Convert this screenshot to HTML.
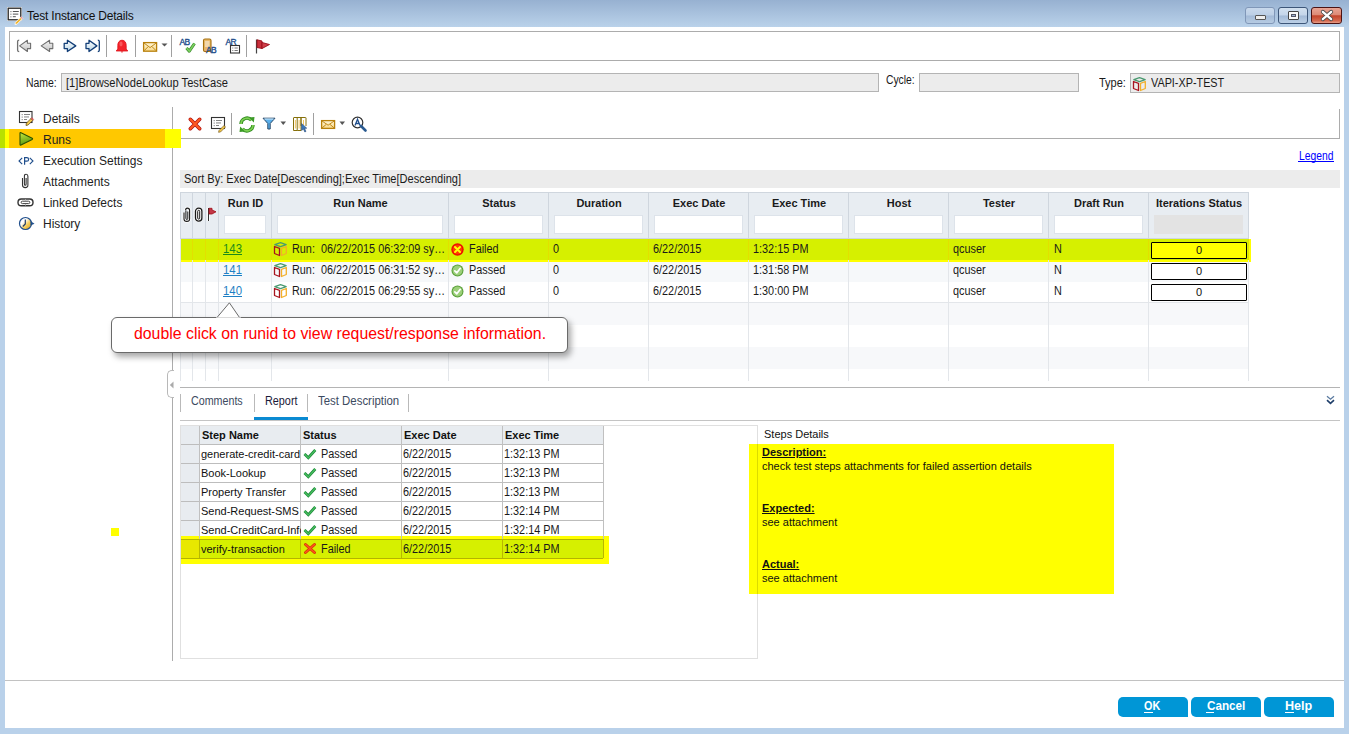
<!DOCTYPE html><html><head><meta charset="utf-8"><style>
*{margin:0;padding:0;box-sizing:border-box}
html,body{width:1349px;height:734px;overflow:hidden;background:#b9d1ea;font-family:"Liberation Sans",sans-serif;color:#000}
.a{position:absolute}
.t{position:absolute;white-space:nowrap;line-height:1}
svg{position:absolute;overflow:visible}
.wb{position:absolute;top:7px;width:30px;height:17px;border-radius:3px;border:1px solid #6d84a6;background:linear-gradient(#c9d9ec 0,#bccfe6 48%,#a3bad7 52%,#b6cbe2 100%)}
.fld{position:absolute;background:#ececec;border:1px solid #b4b4b4}
.lbl{position:absolute;white-space:nowrap;font-size:11.5px;line-height:1;color:#1a1a1a}
.side{position:absolute;left:43px;font-size:12px;line-height:1;color:#222;white-space:nowrap}
.hd{position:absolute;font-size:11px;font-weight:bold;line-height:1;white-space:nowrap;text-align:center;color:#1a1a1a}
.flt{position:absolute;height:19px;background:#fff;border:1px solid #dde3ea}
.c{position:absolute;font-size:12px;line-height:1;white-space:nowrap;color:#1a1a1a;transform:scaleX(.905);transform-origin:0 0;margin-top:-1px}
.btn{position:absolute;top:697px;width:70px;height:20px;background:#0096d6;border-radius:5px 5px 0 5px;color:#fff;font-weight:bold;font-size:12px;text-align:center;line-height:20px}
</style></head><body>
<div class="a" style="left:0px;top:0px;width:1349px;height:27px;background:linear-gradient(#97b1d1,#bad2ea)"></div>
<div class="a" style="left:5px;top:27px;width:1339px;height:701px;background:#fff"></div>
<svg style="left:6px;top:6px" width="18" height="18" viewBox="0 0 18 18"><rect x="1" y="1" width="15" height="14" fill="#fff"/>
<rect x="2.2" y="2.2" width="12.6" height="11.6" fill="#fff" stroke="#222" stroke-width="1.3"/>
<rect x="4.2" y="5" width="1.4" height="1.2" fill="#999"/><rect x="6.8" y="5" width="6" height="1" fill="#555"/>
<rect x="4.2" y="7.6" width="1.4" height="1.2" fill="#999"/><rect x="6.8" y="7.6" width="5.5" height="1" fill="#555"/>
<rect x="4.2" y="10.2" width="1.4" height="1.2" fill="#999"/><rect x="6.8" y="10.2" width="3" height="1" fill="#555"/>
<path d="M9.3 16.5 L14.3 11.5 L16 13.2 L11 18.2 L9 18.5Z" fill="#f2b733" stroke="#fff" stroke-width=".8"/>
<path d="M14.3 11.5 L15.2 10.6 L16.9 12.3 L16 13.2Z" fill="#e77" stroke="#fff" stroke-width=".5"/></svg>
<div class="t" style="left:27px;top:10px;font-size:12px;color:#101010;letter-spacing:-0.2px">Test Instance Details</div>
<div class="wb" style="left:1245px;border-color:#8097b8"><div class="a" style="left:9px;top:7px;width:11px;height:5px;background:#eee;border:1px solid #555;border-radius:1px"></div></div>
<div class="wb" style="left:1278px;border-color:#3d5679;background:linear-gradient(#d2e0ef 0,#c4d5ea 48%,#a3bad7 52%,#bcd0e6 100%)"><div class="a" style="left:9px;top:3px;width:11px;height:9px;background:#fafafa;border:1px solid #444;border-radius:1px"><div class="a" style="left:2px;top:2px;width:5px;height:3px;border:1px solid #556;background:#9fb5cf"></div></div></div>
<div class="wb" style="left:1311px;width:31px;border-color:#4b1313;background:linear-gradient(#e9a595 0,#dd8a76 45%,#c3442b 52%,#d5694f 85%,#e8a08b 100%)"><svg style="left:9px;top:2px" width="12" height="11" viewBox="0 0 12 11"><path d="M1.8 1.8 L10.2 9.2 M10.2 1.8 L1.8 9.2" stroke="#4a4a4a" stroke-width="3.8" stroke-linecap="round"/><path d="M1.8 1.8 L10.2 9.2 M10.2 1.8 L1.8 9.2" stroke="#fff" stroke-width="2.2" stroke-linecap="round"/></svg></div>
<div class="a" style="left:9px;top:31px;width:1331px;height:30px;border:1px solid #acacac"></div>
<svg style="left:15px;top:38px" width="18" height="16" viewBox="0 0 18 16"><defs><linearGradient id="ng" x1="0" y1="0" x2="0" y2="1"><stop offset="0" stop-color="#f4f4f4"/><stop offset="1" stop-color="#c4c4c4"/></linearGradient>
<linearGradient id="bg2" x1="0" y1="0" x2="0" y2="1"><stop offset="0" stop-color="#ffffff"/><stop offset="1" stop-color="#b8d4e4"/></linearGradient></defs>
<path d="M4.2 2.2 Q2.6 2.2 2.6 3.5 V12.3 Q2.6 13.6 4.2 13.6" stroke="#707070" stroke-width="1.3" fill="none"/>
<path d="M4.6 7.9 L12.4 2.3 V5.3 H15.6 V10.6 H12.4 V13.5 Z" fill="url(#ng)" stroke="#6e6e6e" stroke-width="1.1" stroke-linejoin="round"/></svg>
<svg style="left:39px;top:38px" width="16" height="16" viewBox="0 0 16 16"><path d="M2.2 7.9 L10.6 2.3 V5.3 H13.8 V10.6 H10.6 V13.5 Z" fill="url(#ng)" stroke="#6e6e6e" stroke-width="1.1" stroke-linejoin="round"/></svg>
<svg style="left:62px;top:38px" width="16" height="16" viewBox="0 0 16 16"><path d="M13.8 7.9 L5.4 2.3 V5.3 H2.2 V10.6 H5.4 V13.5 Z" fill="url(#bg2)" stroke="#133f78" stroke-width="1.3" stroke-linejoin="round"/></svg>
<svg style="left:84px;top:38px" width="18" height="16" viewBox="0 0 18 16"><path d="M12.9 7.9 L5 2.3 V5.3 H2 V10.6 H5 V13.5 Z" fill="url(#bg2)" stroke="#133f78" stroke-width="1.3" stroke-linejoin="round"/>
<path d="M13.8 2.2 Q15.3 2.2 15.3 3.5 V12.3 Q15.3 13.6 13.8 13.6" stroke="#133f78" stroke-width="1.3" fill="none"/></svg>
<div class="a" style="left:106px;top:35px;width:1px;height:22px;background:#a0a0a0"></div>
<svg style="left:115px;top:39px" width="14" height="15" viewBox="0 0 14 15"><path d="M7 1.2 C4 1.2 2.8 3.8 2.8 6.5 V10 L1.2 12 H12.8 L11.2 10 V6.5 C11.2 3.8 10 1.2 7 1.2Z" fill="#f2232b" stroke="#e01018" stroke-width=".8"/>
<path d="M5.6 12.5 H8.4 L7 13.8Z" fill="#e01018"/><ellipse cx="6" cy="5" rx="1.6" ry="2.4" fill="#ff7a7a" opacity=".6"/></svg>
<div class="a" style="left:135px;top:35px;width:1px;height:22px;background:#a0a0a0"></div>
<svg style="left:142px;top:41px" width="16" height="11" viewBox="0 0 16 11"><defs><linearGradient id="eg" x1="0" y1="0" x2="0" y2="1"><stop offset="0" stop-color="#fff6d8"/><stop offset="1" stop-color="#f8d88a"/></linearGradient></defs>
<rect x="1.6" y="1.6" width="13" height="8.6" fill="url(#eg)" stroke="#b8800c" stroke-width="1.3"/>
<path d="M2 2 L8.1 6.6 L14.2 2 M2 9.8 L6.2 5.6 M14.2 9.8 L10 5.6" stroke="#c08a1a" stroke-width="1" fill="none"/></svg>
<svg style="left:161px;top:43px" width="7" height="4" viewBox="0 0 7 4"><path d="M0.5 0.5 H6.5 L3.5 3.5Z" fill="#555"/></svg>
<div class="a" style="left:171px;top:35px;width:1px;height:22px;background:#a0a0a0"></div>
<svg style="left:179px;top:38px" width="17" height="15" viewBox="0 0 17 15"><text x="0.5" y="7" font-family="Liberation Sans" font-size="8.5" fill="#1f4e8c" stroke="#1f4e8c" stroke-width="0.35" letter-spacing="-0.6">AB</text>
<path d="M7.5 10 L10.3 13.2 L15.5 5.5" stroke="#3a8a2a" stroke-width="3" fill="none" stroke-linejoin="round"/>
<path d="M7.5 10 L10.3 13.2 L15.5 5.5" stroke="#7ad060" stroke-width="1.6" fill="none" stroke-linejoin="round"/></svg>
<svg style="left:202px;top:38px" width="17" height="16" viewBox="0 0 17 16"><path d="M1.5 2.5 Q1.5 1 3 1 H7.5 Q9 1 9 2.5 V13.5 H3 Q1.5 13.5 1.5 12Z" fill="#e8b86a" stroke="#a5700e" stroke-width="1.1"/>
<path d="M3 4 H7.5 M3 6 H7.5 M3 8 H7.5" stroke="#fff" stroke-width=".9"/>
<text x="4" y="14.6" font-family="Liberation Sans" font-size="8.5" fill="#1f4e8c" stroke="#1f4e8c" stroke-width="0.35" letter-spacing="-0.6">AB</text></svg>
<svg style="left:225px;top:38px" width="16" height="16" viewBox="0 0 16 16"><text x="0.5" y="7" font-family="Liberation Sans" font-size="8.5" fill="#1f4e8c" stroke="#1f4e8c" stroke-width="0.35" letter-spacing="-0.6">AR</text>
<rect x="5.5" y="7.5" width="9" height="7.5" fill="#fff" stroke="#333" stroke-width="1.1"/>
<path d="M7.3 10 H8.3 M9.5 10 H12.8 M7.3 12.5 H8.3 M9.5 12.5 H12.8" stroke="#777" stroke-width="1"/></svg>
<div class="a" style="left:246px;top:35px;width:1px;height:22px;background:#a0a0a0"></div>
<svg style="left:254px;top:38px" width="17" height="17" viewBox="0 0 17 17"><path d="M2.5 1.5 V15.5" stroke="#444" stroke-width="1.2"/>
<path d="M3 1.8 L8 3 V10.5 L3 9.5Z" fill="#c8303c" stroke="#9a0c18" stroke-width=".9" stroke-linejoin="round"/>
<path d="M8 4.5 L15.5 6.5 L8 10.5Z" fill="#d0404a" stroke="#9a0c18" stroke-width=".9" stroke-linejoin="round"/></svg>
<div class="t" style="left:25.6px;top:77px;font-size:12px;transform:scaleX(0.8687);transform-origin:0 0;color:#1a1a1a">Name:</div>
<div class="a" style="left:61px;top:73px;width:818px;height:19px;background:#ececec;border:1px solid #b4b4b4"></div>
<div class="t" style="left:66px;top:77px;font-size:12px;transform:scaleX(0.9282);transform-origin:0 0;color:#1a1a1a">[1]BrowseNodeLookup TestCase</div>
<div class="t" style="left:885.6px;top:74px;font-size:12px;transform:scaleX(0.8608);transform-origin:0 0;color:#1a1a1a">Cycle:</div>
<div class="a" style="left:919px;top:73px;width:160px;height:19px;background:#ececec;border:1px solid #b4b4b4"></div>
<div class="t" style="left:1099.2px;top:77px;font-size:12px;transform:scaleX(0.9166);transform-origin:0 0;color:#1a1a1a">Type:</div>
<div class="a" style="left:1130px;top:73px;width:210px;height:20px;background:#ececec;border:1px solid #b4b4b4"></div>
<svg style="left:1132px;top:76px" width="15" height="16" viewBox="0 0 15 16"><path d="M1.8 3.6 L7.5 1.6 L13.2 3.6 L7.5 5.6Z" fill="none" stroke="#4a9a70" stroke-width="1.2" stroke-linejoin="round"/>
<path d="M1.5 5.5 L6.5 7.3 V14.5 L1.5 12.5Z" fill="none" stroke="#a8141e" stroke-width="1.3" stroke-linejoin="round"/>
<path d="M8.5 7.3 L13.3 5.5 V12.5 L8.5 14.5Z" fill="none" stroke="#f2b02a" stroke-width="1.3" stroke-linejoin="round"/></svg>
<div class="t" style="left:1151px;top:77px;font-size:12px;transform:scaleX(0.9023);transform-origin:0 0;color:#1a1a1a">VAPI-XP-TEST</div>
<div class="a" style="left:0px;top:129px;width:181px;height:19px;background:#ffff00"></div>
<div class="a" style="left:0px;top:129px;width:5px;height:19px;background:#b8e000"></div>
<div class="a" style="left:9px;top:129px;width:156px;height:19px;background:#ffc800"></div>
<div class="side" style="left:43px;top:113px;">Details</div>
<div class="side" style="left:43px;top:134px;">Runs</div>
<div class="side" style="left:43px;top:155px;">Execution Settings</div>
<div class="side" style="left:43px;top:176px;">Attachments</div>
<div class="side" style="left:43px;top:197px;">Linked Defects</div>
<div class="side" style="left:43px;top:218px;">History</div>
<svg style="left:18px;top:110px" width="17" height="17" viewBox="0 0 17 17"><rect x="1.5" y="1.5" width="12.5" height="11" fill="#fff" stroke="#333" stroke-width="1.1"/>
<rect x="3.5" y="4" width="1.5" height="1.2" fill="#aaa"/><rect x="6" y="4" width="6" height=".9" fill="#777"/>
<rect x="3.5" y="6.5" width="1.5" height="1.2" fill="#aaa"/><rect x="6" y="6.5" width="5" height=".9" fill="#777"/>
<rect x="3.5" y="9" width="1.5" height="1.2" fill="#aaa"/><rect x="6" y="9" width="3" height=".9" fill="#777"/>
<path d="M8.3 13.2 L13 8.5 L14.8 10.3 L10.1 15 L8 15.5Z" fill="#f2c94c" stroke="#5a4010" stroke-width=".7"/>
<path d="M13 8.5 L13.9 7.6 L15.7 9.4 L14.8 10.3Z" fill="#e66" stroke="#a33" stroke-width=".4"/></svg>
<svg style="left:18px;top:131px" width="17" height="16" viewBox="0 0 17 16"><defs><linearGradient id="pg" x1="0" y1="0" x2="0.3" y2="1"><stop offset="0" stop-color="#c8e840"/><stop offset="1" stop-color="#5a9a10"/></linearGradient></defs>
<path d="M2 2.2 Q2 1.2 3 1.7 L14.2 7.2 Q15 7.8 14.2 8.4 L3 14 Q2 14.5 2 13.5Z" fill="url(#pg)" stroke="#2a5200" stroke-width="1.1" stroke-linejoin="round"/></svg>
<svg style="left:17px;top:156px" width="18" height="10" viewBox="0 0 18 10"><path d="M5.2 1.8 L2 5 L5.2 8.2 M12.8 1.8 L16 5 L12.8 8.2" fill="none" stroke="#1f4e8c" stroke-width="1.1"/><path d="M7.6 8.8 V1.6 H9.8 Q11.6 1.6 11.6 3.4 Q11.6 5.2 9.8 5.2 H7.6" fill="none" stroke="#1f4e8c" stroke-width="1.2"/></svg>
<svg style="left:20px;top:173px" width="11" height="16" viewBox="0 0 11 16"><path d="M2.5 5 V12 Q2.5 14.6 5.2 14.6 Q7.9 14.6 7.9 12 V3.2 Q7.9 1.2 6.1 1.2 Q4.4 1.2 4.4 3.2 V11 Q4.4 12.3 5.2 12.3 Q6.1 12.3 6.1 11 V5" fill="none" stroke="#fff" stroke-width="2.4"/>
<path d="M2.5 5 V12 Q2.5 14.6 5.2 14.6 Q7.9 14.6 7.9 12 V3.2 Q7.9 1.2 6.1 1.2 Q4.4 1.2 4.4 3.2 V11 Q4.4 12.3 5.2 12.3 Q6.1 12.3 6.1 11 V5" fill="none" stroke="#333" stroke-width="1.1"/></svg>
<svg style="left:17px;top:198px" width="17" height="9" viewBox="0 0 17 9"><rect x="1" y="1" width="15" height="6.8" rx="3.3" fill="#fff" stroke="#333" stroke-width="1.4"/>
<rect x="4.2" y="3.2" width="8.6" height="2.4" rx="1.2" fill="#fff" stroke="#444" stroke-width="1"/>
<path d="M8.5 1.2 V2.6 M8.5 6.2 V7.6" stroke="#aaa" stroke-width="1"/></svg>
<svg style="left:18px;top:216px" width="17" height="15" viewBox="0 0 17 15"><defs><linearGradient id="hg" x1="0" y1="0" x2="1" y2="1"><stop offset=".35" stop-color="#fff"/><stop offset=".6" stop-color="#f6cf60"/><stop offset="1" stop-color="#d89a10"/></linearGradient></defs>
<circle cx="7.5" cy="7.5" r="6" fill="url(#hg)" stroke="#1f4e8c" stroke-width="1.2"/>
<path d="M7.3 3.5 V8 L4.8 10.5" stroke="#1f3a6a" stroke-width="1.2" fill="none"/>
<path d="M12.5 5 L16.5 7.8 L12.5 9.6Z" fill="#1f4e8c"/></svg>
<div class="a" style="left:172px;top:107px;width:1px;height:554px;background:#acacac"></div>
<div class="a" style="left:173px;top:138px;width:1167px;height:1px;background:#acacac"></div>
<div class="a" style="left:1339px;top:109px;width:1px;height:30px;background:#acacac"></div>
<div class="a" style="left:165px;top:129px;width:16px;height:19px;background:#ffff00"></div>
<svg style="left:188px;top:117px" width="14" height="14" viewBox="0 0 14 14"><path d="M2.3 2.3 L11.7 11.7 M11.7 2.3 L2.3 11.7" stroke="#b01010" stroke-width="3.6" stroke-linecap="round"/>
<path d="M2.3 2.3 L11.7 11.7 M11.7 2.3 L2.3 11.7" stroke="#ff5a20" stroke-width="2.1" stroke-linecap="round"/></svg>
<svg style="left:210px;top:116px" width="16" height="16" viewBox="0 0 16 16"><rect x="1.5" y="1.5" width="13" height="11" fill="#fff" stroke="#333" stroke-width="1.1"/>
<rect x="3.5" y="4" width="1.5" height="1.2" fill="#aaa"/><rect x="6" y="4" width="6" height=".9" fill="#777"/>
<rect x="3.5" y="6.5" width="1.5" height="1.2" fill="#aaa"/><rect x="6" y="6.5" width="5" height=".9" fill="#777"/>
<rect x="3.5" y="9" width="1.5" height="1.2" fill="#aaa"/><rect x="6" y="9" width="3" height=".9" fill="#777"/>
<path d="M9 14.5 L14 9.5 L15.5 11 L10.5 16 L8.5 16.3Z" fill="#f2c94c" stroke="#6a4a10" stroke-width=".6"/></svg>
<div class="a" style="left:231px;top:113px;width:1px;height:22px;background:#a0a0a0"></div>
<svg style="left:238px;top:116px" width="18" height="17" viewBox="0 0 18 17"><path d="M3 8 A6 6 0 0 1 13.5 4.2" fill="none" stroke="#2e8a1e" stroke-width="3.4"/>
<path d="M3 8 A6 6 0 0 1 13.5 4.2" fill="none" stroke="#7ccf52" stroke-width="1.8"/>
<path d="M15 9 A6 6 0 0 1 4.5 12.8" fill="none" stroke="#2e8a1e" stroke-width="3.4"/>
<path d="M15 9 A6 6 0 0 1 4.5 12.8" fill="none" stroke="#7ccf52" stroke-width="1.8"/>
<path d="M11 1.5 L16.5 1 L15.8 6.5Z" fill="#3c9a28"/><path d="M7 15.5 L1.5 16 L2.2 10.5Z" fill="#3c9a28"/></svg>
<svg style="left:262px;top:117px" width="14" height="13" viewBox="0 0 14 13"><path d="M1 1.2 H13 L8.2 6.5 V12 H5.8 V6.5Z" fill="#5ab0ec" stroke="#2a4a6a" stroke-width="1" stroke-linejoin="round"/>
<path d="M2.5 2 H11.5" stroke="#d8f0ff" stroke-width="1"/></svg>
<svg style="left:280px;top:121px" width="7" height="5" viewBox="0 0 7 5"><path d="M0.5 0.5 H6 L3.25 4Z" fill="#555"/></svg>
<svg style="left:292px;top:116px" width="16" height="17" viewBox="0 0 16 17"><path d="M1.5 14.5 V2 Q1.5 1.5 2 1.5 H13.5 Q14 1.5 14 2 V10" fill="#fff" stroke="#86700a" stroke-width="1"/>
<path d="M1.5 14.5 H5.2 V1.5 M5.2 14.5 H9 V1.5 M9 1.5 V10" fill="none" stroke="#86700a" stroke-width="1"/>
<path d="M3.4 4 V12.5 M7.1 4 V12.5 M11.5 4 V9" stroke="#f0c050" stroke-width=".9"/>
<path d="M9.6 7.5 L14.8 12.2 L12.6 12.4 L14 15.4 L12.8 16 L11.4 13 L9.6 14.5Z" fill="#3a78b8" stroke="#1a3a6a" stroke-width=".5"/></svg>
<div class="a" style="left:313px;top:113px;width:1px;height:22px;background:#a0a0a0"></div>
<svg style="left:320px;top:119px" width="16" height="11" viewBox="0 0 16 11"><rect x="1.6" y="1.6" width="13" height="7.8" fill="url(#eg)" stroke="#b8800c" stroke-width="1.3"/>
<path d="M2 2 L8.1 6.2 L14.2 2 M2 9 L6.2 5.4 M14.2 9 L10 5.4" stroke="#c08a1a" stroke-width="1" fill="none"/></svg>
<svg style="left:339px;top:121px" width="7" height="5" viewBox="0 0 7 5"><path d="M0.5 0.5 H6 L3.25 4Z" fill="#555"/></svg>
<svg style="left:351px;top:116px" width="16" height="16" viewBox="0 0 16 16"><circle cx="6.5" cy="6.5" r="5.3" fill="#fff" stroke="#333" stroke-width="1.2"/>
<path d="M10 10 L14.5 14.5" stroke="#2a5a90" stroke-width="2.6" stroke-linecap="round"/>
<path d="M4 9.5 L6.5 3.2 L9 9.5 M4.8 7.5 H8.2" stroke="#1f4e8c" stroke-width="1.3" fill="none"/></svg>
<div class="t" style="left:1298.7px;top:150px;font-size:12px;transform:scaleX(0.8592);transform-origin:0 0;color:#0000ff">Legend</div>
<div class="a" style="left:1298px;top:161px;width:36px;height:1px;background:#0000ff"></div>
<div class="a" style="left:180px;top:170px;width:1160px;height:18px;background:#ececec"></div>
<div class="t" style="left:184px;top:173px;font-size:12px;transform:scaleX(0.9209);transform-origin:0 0;color:#1a1a1a">Sort By: Exec Date[Descending];Exec Time[Descending]</div>
<div class="a" style="left:180px;top:192px;width:1069px;height:47px;background:#e8edf2;border:1px solid #cfd6de"></div>
<div class="a" style="left:192px;top:192px;width:1px;height:47px;background:#cfd6de"></div>
<div class="a" style="left:205px;top:192px;width:1px;height:47px;background:#cfd6de"></div>
<div class="a" style="left:218px;top:192px;width:1px;height:47px;background:#cfd6de"></div>
<div class="a" style="left:271px;top:192px;width:1px;height:47px;background:#cfd6de"></div>
<div class="a" style="left:448px;top:192px;width:1px;height:47px;background:#cfd6de"></div>
<div class="a" style="left:548px;top:192px;width:1px;height:47px;background:#cfd6de"></div>
<div class="a" style="left:648px;top:192px;width:1px;height:47px;background:#cfd6de"></div>
<div class="a" style="left:748px;top:192px;width:1px;height:47px;background:#cfd6de"></div>
<div class="a" style="left:848px;top:192px;width:1px;height:47px;background:#cfd6de"></div>
<div class="a" style="left:948px;top:192px;width:1px;height:47px;background:#cfd6de"></div>
<div class="a" style="left:1048px;top:192px;width:1px;height:47px;background:#cfd6de"></div>
<div class="a" style="left:1148px;top:192px;width:1px;height:47px;background:#cfd6de"></div>
<svg style="left:182px;top:207px" width="10" height="16" viewBox="0 0 10 16"><path d="M2 5.5 V12 Q2 14.4 4.8 14.4 Q7.6 14.4 7.6 12 V3.3 Q7.6 1.1 5.3 1.1 Q3.6 1.1 3.6 3.3" fill="none" stroke="#fff" stroke-width="2.6"/>
<path d="M2 5.5 V12 Q2 14.4 4.8 14.4 Q7.6 14.4 7.6 12 V3.3 Q7.6 1.1 5.3 1.1 Q3.6 1.1 3.6 3.3" fill="none" stroke="#1a1a1a" stroke-width="1.1"/>
<path d="M3.9 3.5 V11.3 Q3.9 12.5 4.9 12.5 Q5.8 12.5 5.8 11.3 V4.5" fill="none" stroke="#1a1a1a" stroke-width="1"/></svg>
<svg style="left:194px;top:207px" width="10" height="16" viewBox="0 0 10 16"><rect x="1.5" y="1.2" width="6.4" height="13" rx="3.1" fill="#fff" stroke="#fff" stroke-width="2"/>
<rect x="1.5" y="1.2" width="6.4" height="13" rx="3.1" fill="none" stroke="#1a1a1a" stroke-width="1.3"/>
<rect x="3.7" y="3.3" width="2" height="8.8" rx="1" fill="none" stroke="#1a1a1a" stroke-width="1"/></svg>
<svg style="left:207px;top:207px" width="10" height="15" viewBox="0 0 10 15"><path d="M1.5 1 V14" stroke="#fff" stroke-width="2.4"/><path d="M1.5 1 V14" stroke="#333" stroke-width="1"/>
<path d="M2 1.3 H5 V3 L9 4.8 L5 7 H2Z" fill="#c43848" stroke="#a00c16" stroke-width=".8" stroke-linejoin="round"/></svg>
<div class="hd" style="left:219px;top:198px;width:53px">Run ID</div>
<div class="flt" style="left:224px;top:215px;width:42px"></div>
<div class="hd" style="left:272px;top:198px;width:177px">Run Name</div>
<div class="flt" style="left:277px;top:215px;width:166px"></div>
<div class="hd" style="left:449px;top:198px;width:100px">Status</div>
<div class="flt" style="left:454px;top:215px;width:89px"></div>
<div class="hd" style="left:549px;top:198px;width:100px">Duration</div>
<div class="flt" style="left:554px;top:215px;width:89px"></div>
<div class="hd" style="left:649px;top:198px;width:100px">Exec Date</div>
<div class="flt" style="left:654px;top:215px;width:89px"></div>
<div class="hd" style="left:749px;top:198px;width:100px">Exec Time</div>
<div class="flt" style="left:754px;top:215px;width:89px"></div>
<div class="hd" style="left:849px;top:198px;width:100px">Host</div>
<div class="flt" style="left:854px;top:215px;width:89px"></div>
<div class="hd" style="left:949px;top:198px;width:100px">Tester</div>
<div class="flt" style="left:954px;top:215px;width:89px"></div>
<div class="hd" style="left:1049px;top:198px;width:100px">Draft Run</div>
<div class="flt" style="left:1054px;top:215px;width:89px"></div>
<div class="hd" style="left:1149px;top:198px;width:100px">Iterations Status</div>
<div class="a" style="left:1154px;top:215px;width:89px;height:19px;background:#e3e3e3"></div>
<div class="a" style="left:180px;top:239px;width:1071px;height:23px;background:#ffff00"></div>
<div class="a" style="left:181px;top:239px;width:1067px;height:21px;background:#d6f000"></div>
<div class="a" style="left:181px;top:262px;width:1067px;height:20px;background:#f6f8fa"></div>
<div class="a" style="left:181px;top:282px;width:1067px;height:20px;background:#ffffff"></div>
<div class="a" style="left:181px;top:302px;width:1067px;height:23px;background:#f7f8fa"></div>
<div class="a" style="left:181px;top:325px;width:1067px;height:22px;background:#ffffff"></div>
<div class="a" style="left:181px;top:347px;width:1067px;height:22px;background:#f7f8fa"></div>
<div class="a" style="left:181px;top:369px;width:1067px;height:12px;background:#ffffff"></div>
<div class="a" style="left:181px;top:302px;width:1067px;height:1px;background:#e3e6ea"></div>
<div class="a" style="left:192px;top:239px;width:1px;height:142px;background:#e3e6ea"></div>
<div class="a" style="left:205px;top:239px;width:1px;height:142px;background:#e3e6ea"></div>
<div class="a" style="left:218px;top:239px;width:1px;height:142px;background:#e3e6ea"></div>
<div class="a" style="left:271px;top:239px;width:1px;height:142px;background:#e3e6ea"></div>
<div class="a" style="left:448px;top:239px;width:1px;height:142px;background:#e3e6ea"></div>
<div class="a" style="left:548px;top:239px;width:1px;height:142px;background:#e3e6ea"></div>
<div class="a" style="left:648px;top:239px;width:1px;height:142px;background:#e3e6ea"></div>
<div class="a" style="left:748px;top:239px;width:1px;height:142px;background:#e3e6ea"></div>
<div class="a" style="left:848px;top:239px;width:1px;height:142px;background:#e3e6ea"></div>
<div class="a" style="left:948px;top:239px;width:1px;height:142px;background:#e3e6ea"></div>
<div class="a" style="left:1048px;top:239px;width:1px;height:142px;background:#e3e6ea"></div>
<div class="a" style="left:1148px;top:239px;width:1px;height:142px;background:#e3e6ea"></div>
<div class="a" style="left:1248px;top:239px;width:1px;height:142px;background:#e3e6ea"></div>
<div class="a" style="left:192px;top:239px;width:1px;height:21px;background:#e2e000"></div>
<div class="a" style="left:205px;top:239px;width:1px;height:21px;background:#e2e000"></div>
<div class="a" style="left:218px;top:239px;width:1px;height:21px;background:#e2e000"></div>
<div class="a" style="left:271px;top:239px;width:1px;height:21px;background:#e2e000"></div>
<div class="a" style="left:448px;top:239px;width:1px;height:21px;background:#e2e000"></div>
<div class="a" style="left:548px;top:239px;width:1px;height:21px;background:#e2e000"></div>
<div class="a" style="left:648px;top:239px;width:1px;height:21px;background:#e2e000"></div>
<div class="a" style="left:748px;top:239px;width:1px;height:21px;background:#e2e000"></div>
<div class="a" style="left:848px;top:239px;width:1px;height:21px;background:#e2e000"></div>
<div class="a" style="left:948px;top:239px;width:1px;height:21px;background:#e2e000"></div>
<div class="a" style="left:1048px;top:239px;width:1px;height:21px;background:#e2e000"></div>
<div class="a" style="left:1148px;top:239px;width:1px;height:21px;background:#e2e000"></div>
<div class="a" style="left:1248px;top:239px;width:1px;height:21px;background:#e2e000"></div>
<div class="a" style="left:180px;top:239px;width:1px;height:142px;background:#e3e6ea"></div>
<div class="c" style="left:223px;top:244px;color:#1a8a1a;transform:scaleX(.95)">143</div>
<div class="a" style="left:223px;top:254px;width:19px;height:1px;background:#1a8a1a"></div>
<svg style="left:273px;top:241px" width="15" height="16" viewBox="0 0 15 16"><path d="M1.8 3.6 L7.5 1.6 L13.2 3.6 L7.5 5.6Z" fill="none" stroke="#4a9a70" stroke-width="1.2" stroke-linejoin="round"/>
<path d="M1.5 5.5 L6.5 7.3 V14.5 L1.5 12.5Z" fill="none" stroke="#a8141e" stroke-width="1.3" stroke-linejoin="round"/>
<path d="M8.5 7.3 L13.3 5.5 V12.5 L8.5 14.5Z" fill="none" stroke="#f2b02a" stroke-width="1.3" stroke-linejoin="round"/></svg>
<div class="t" style="left:292px;top:243px;font-size:12px;transform:scaleX(0.9030);transform-origin:0 0;color:#1a1a1a">Run:&nbsp; 06/22/2015 06:32:09 sy…</div>
<svg style="left:451px;top:243px" width="13" height="13" viewBox="0 0 13 13"><circle cx="6.5" cy="6.5" r="6.2" fill="#ee1000"/><circle cx="6.5" cy="6.5" r="4.8" fill="#ff3a00"/>
<path d="M4 4 L9 9 M9 4 L4 9" stroke="#ffff00" stroke-width="2" stroke-linecap="round"/></svg>
<div class="c" style="left:469px;top:244px;">Failed</div>
<div class="c" style="left:553px;top:244px;">0</div>
<div class="c" style="left:653px;top:244px;">6/22/2015</div>
<div class="c" style="left:753px;top:244px;">1:32:15 PM</div>
<div class="c" style="left:953px;top:244px;">qcuser</div>
<div class="c" style="left:1054px;top:244px;">N</div>
<div class="a" style="left:1151px;top:242px;width:96px;height:17px;border:1.4px solid #000;border-radius:1px;background:#ffff00;font-size:11px;text-align:center;line-height:15px;color:#111">0</div>
<div class="c" style="left:223px;top:265px;color:#1e7fc4;transform:scaleX(.95)">141</div>
<div class="a" style="left:223px;top:275px;width:19px;height:1px;background:#1e7fc4"></div>
<svg style="left:273px;top:262px" width="15" height="16" viewBox="0 0 15 16"><path d="M1.8 3.6 L7.5 1.6 L13.2 3.6 L7.5 5.6Z" fill="none" stroke="#4a9a70" stroke-width="1.2" stroke-linejoin="round"/>
<path d="M1.5 5.5 L6.5 7.3 V14.5 L1.5 12.5Z" fill="none" stroke="#a8141e" stroke-width="1.3" stroke-linejoin="round"/>
<path d="M8.5 7.3 L13.3 5.5 V12.5 L8.5 14.5Z" fill="none" stroke="#f2b02a" stroke-width="1.3" stroke-linejoin="round"/></svg>
<div class="t" style="left:292px;top:264px;font-size:12px;transform:scaleX(0.9030);transform-origin:0 0;color:#1a1a1a">Run:&nbsp; 06/22/2015 06:31:52 sy…</div>
<svg style="left:451px;top:264px" width="13" height="13" viewBox="0 0 13 13"><circle cx="6.5" cy="6.5" r="6" fill="#5aa03a"/><circle cx="6.5" cy="6.5" r="4.9" fill="#9ccf7a"/>
<path d="M3.8 6.8 L5.8 8.8 L9.3 4.3" stroke="#fff" stroke-width="1.7" fill="none" stroke-linecap="round" stroke-linejoin="round"/></svg>
<div class="c" style="left:469px;top:265px;">Passed</div>
<div class="c" style="left:553px;top:265px;">0</div>
<div class="c" style="left:653px;top:265px;">6/22/2015</div>
<div class="c" style="left:753px;top:265px;">1:31:58 PM</div>
<div class="c" style="left:953px;top:265px;">qcuser</div>
<div class="c" style="left:1054px;top:265px;">N</div>
<div class="a" style="left:1151px;top:263px;width:96px;height:17px;border:1.4px solid #000;border-radius:1px;background:#fff;font-size:11px;text-align:center;line-height:15px;color:#111">0</div>
<div class="c" style="left:223px;top:286px;color:#1e7fc4;transform:scaleX(.95)">140</div>
<div class="a" style="left:223px;top:296px;width:19px;height:1px;background:#1e7fc4"></div>
<svg style="left:273px;top:283px" width="15" height="16" viewBox="0 0 15 16"><path d="M1.8 3.6 L7.5 1.6 L13.2 3.6 L7.5 5.6Z" fill="none" stroke="#4a9a70" stroke-width="1.2" stroke-linejoin="round"/>
<path d="M1.5 5.5 L6.5 7.3 V14.5 L1.5 12.5Z" fill="none" stroke="#a8141e" stroke-width="1.3" stroke-linejoin="round"/>
<path d="M8.5 7.3 L13.3 5.5 V12.5 L8.5 14.5Z" fill="none" stroke="#f2b02a" stroke-width="1.3" stroke-linejoin="round"/></svg>
<div class="t" style="left:292px;top:285px;font-size:12px;transform:scaleX(0.9030);transform-origin:0 0;color:#1a1a1a">Run:&nbsp; 06/22/2015 06:29:55 sy…</div>
<svg style="left:451px;top:285px" width="13" height="13" viewBox="0 0 13 13"><circle cx="6.5" cy="6.5" r="6" fill="#5aa03a"/><circle cx="6.5" cy="6.5" r="4.9" fill="#9ccf7a"/>
<path d="M3.8 6.8 L5.8 8.8 L9.3 4.3" stroke="#fff" stroke-width="1.7" fill="none" stroke-linecap="round" stroke-linejoin="round"/></svg>
<div class="c" style="left:469px;top:286px;">Passed</div>
<div class="c" style="left:553px;top:286px;">0</div>
<div class="c" style="left:653px;top:286px;">6/22/2015</div>
<div class="c" style="left:753px;top:286px;">1:30:00 PM</div>
<div class="c" style="left:953px;top:286px;">qcuser</div>
<div class="c" style="left:1054px;top:286px;">N</div>
<div class="a" style="left:1151px;top:284px;width:96px;height:17px;border:1.4px solid #000;border-radius:1px;background:#fff;font-size:11px;text-align:center;line-height:15px;color:#111">0</div>
<div class="a" style="left:180px;top:387px;width:1160px;height:1px;background:#b4b4b4"></div>
<div class="a" style="left:111px;top:317px;width:457px;height:36px;background:#fff;border:1px solid #6a6a6a;border-radius:6px;box-shadow:3px 4px 6px rgba(0,0,0,.35)"></div>
<svg style="left:216px;top:302px" width="25" height="17" viewBox="0 0 25 17"><path d="M1 15.5 L13.4 0.8 L23.5 15.5" fill="#fff" stroke="#6a6a6a" stroke-width="1"/><rect x="0" y="15.5" width="25" height="2" fill="#fff"/></svg>
<div class="t" style="left:133.8px;top:325px;font-size:17px;transform:scaleX(0.9317);transform-origin:0 0;color:#ff0000">double click on runid to view request/response information.</div>
<div class="a" style="left:167px;top:370px;width:7px;height:28px;background:#fff;border:1px solid #b8b8b8;border-right:none;border-radius:5px 0 0 5px"></div>
<svg style="left:169px;top:381px" width="5" height="8" viewBox="0 0 5 8"><path d="M4.5 0.5 V7.5 L0.8 4Z" fill="#aaa"/></svg>
<div class="a" style="left:180px;top:394px;width:1px;height:18px;background:#b9b9b9"></div>
<div class="a" style="left:254px;top:394px;width:1px;height:18px;background:#b9b9b9"></div>
<div class="a" style="left:307px;top:394px;width:1px;height:18px;background:#b9b9b9"></div>
<div class="a" style="left:408px;top:394px;width:1px;height:18px;background:#b9b9b9"></div>
<div class="t" style="left:191.2px;top:395px;font-size:12px;transform:scaleX(0.8912);transform-origin:0 0;color:#3c4a60">Comments</div>
<div class="t" style="left:265.4px;top:395px;font-size:12px;transform:scaleX(0.9024);transform-origin:0 0;color:#1a1a3a">Report</div>
<div class="t" style="left:317.5px;top:395px;font-size:12px;transform:scaleX(0.9513);transform-origin:0 0;color:#3c4a60">Test Description</div>
<div class="a" style="left:254px;top:417px;width:54px;height:4px;background:#0a8ad2"></div>
<div class="a" style="left:180px;top:420px;width:1160px;height:1px;background:#c4c4c4"></div>
<svg style="left:1326px;top:395px" width="9" height="10" viewBox="0 0 9 10"><path d="M1 1.2 L4.5 4.2 L8 1.2" fill="none" stroke="#5a7aa0" stroke-width="1.3"/>
<path d="M1 5.2 L4.5 8.4 L8 5.2" fill="none" stroke="#1f3f6a" stroke-width="1.6"/></svg>
<div class="a" style="left:180px;top:425px;width:578px;height:234px;border:1px solid #e0e0e0;background:#fff"></div>
<div class="a" style="left:181px;top:426px;width:422px;height:19px;background:#e8ecf0"></div>
<div class="a" style="left:181px;top:445px;width:18px;height:114px;background:#e8ecf0"></div>
<div class="a" style="left:181px;top:536px;width:428px;height:28px;background:#ffff00"></div>
<div class="a" style="left:199px;top:539px;width:404px;height:19px;background:#d6f000"></div>
<div class="a" style="left:181px;top:539px;width:18px;height:19px;background:#e8e800"></div>
<div class="a" style="left:181px;top:444px;width:422px;height:1px;background:#bdbdbd"></div>
<div class="a" style="left:181px;top:463px;width:422px;height:1px;background:#bdbdbd"></div>
<div class="a" style="left:181px;top:482px;width:422px;height:1px;background:#bdbdbd"></div>
<div class="a" style="left:181px;top:501px;width:422px;height:1px;background:#bdbdbd"></div>
<div class="a" style="left:181px;top:520px;width:422px;height:1px;background:#bdbdbd"></div>
<div class="a" style="left:181px;top:539px;width:422px;height:1px;background:#b4b400"></div>
<div class="a" style="left:181px;top:558px;width:422px;height:1px;background:#b4b400"></div>
<div class="a" style="left:199px;top:426px;width:1px;height:132px;background:#c0c0c0"></div>
<div class="a" style="left:300px;top:426px;width:1px;height:132px;background:#c0c0c0"></div>
<div class="a" style="left:401px;top:426px;width:1px;height:132px;background:#c0c0c0"></div>
<div class="a" style="left:502px;top:426px;width:1px;height:132px;background:#c0c0c0"></div>
<div class="a" style="left:603px;top:426px;width:1px;height:132px;background:#c0c0c0"></div>
<div class="a" style="left:199px;top:539px;width:1px;height:19px;background:#b8b800"></div>
<div class="a" style="left:300px;top:539px;width:1px;height:19px;background:#b8b800"></div>
<div class="a" style="left:401px;top:539px;width:1px;height:19px;background:#b8b800"></div>
<div class="a" style="left:502px;top:539px;width:1px;height:19px;background:#b8b800"></div>
<div class="a" style="left:603px;top:539px;width:1px;height:19px;background:#b8b800"></div>
<div class="t" style="left:202px;top:430px;font-size:11px;font-weight:bold;color:#111">Step Name</div>
<div class="t" style="left:303px;top:430px;font-size:11px;font-weight:bold;color:#111">Status</div>
<div class="t" style="left:404px;top:430px;font-size:11px;font-weight:bold;color:#111">Exec Date</div>
<div class="t" style="left:505px;top:430px;font-size:11px;font-weight:bold;color:#111">Exec Time</div>
<div class="a" style="left:200px;top:449px;width:101px;overflow:hidden;white-space:nowrap;font-size:11px;line-height:1;color:#111;padding-left:1px">generate-credit-card</div>
<svg style="left:303px;top:448px" width="14" height="12" viewBox="0 0 14 12"><path d="M1.5 6 L5.3 9.8 L12.3 2" fill="none" stroke="#1e8a3a" stroke-width="2.8" stroke-linejoin="miter"/>
<path d="M1.5 6 L5.3 9.8 L12.3 2" fill="none" stroke="#48c060" stroke-width="1.2"/></svg>
<div class="c" style="left:321px;top:449px;">Passed</div>
<div class="c" style="left:403px;top:449px;">6/22/2015</div>
<div class="c" style="left:504px;top:449px;">1:32:13 PM</div>
<div class="a" style="left:200px;top:468px;width:101px;overflow:hidden;white-space:nowrap;font-size:11px;line-height:1;color:#111;padding-left:1px">Book-Lookup</div>
<svg style="left:303px;top:467px" width="14" height="12" viewBox="0 0 14 12"><path d="M1.5 6 L5.3 9.8 L12.3 2" fill="none" stroke="#1e8a3a" stroke-width="2.8" stroke-linejoin="miter"/>
<path d="M1.5 6 L5.3 9.8 L12.3 2" fill="none" stroke="#48c060" stroke-width="1.2"/></svg>
<div class="c" style="left:321px;top:468px;">Passed</div>
<div class="c" style="left:403px;top:468px;">6/22/2015</div>
<div class="c" style="left:504px;top:468px;">1:32:13 PM</div>
<div class="a" style="left:200px;top:487px;width:101px;overflow:hidden;white-space:nowrap;font-size:11px;line-height:1;color:#111;padding-left:1px">Property Transfer</div>
<svg style="left:303px;top:486px" width="14" height="12" viewBox="0 0 14 12"><path d="M1.5 6 L5.3 9.8 L12.3 2" fill="none" stroke="#1e8a3a" stroke-width="2.8" stroke-linejoin="miter"/>
<path d="M1.5 6 L5.3 9.8 L12.3 2" fill="none" stroke="#48c060" stroke-width="1.2"/></svg>
<div class="c" style="left:321px;top:487px;">Passed</div>
<div class="c" style="left:403px;top:487px;">6/22/2015</div>
<div class="c" style="left:504px;top:487px;">1:32:13 PM</div>
<div class="a" style="left:200px;top:506px;width:101px;overflow:hidden;white-space:nowrap;font-size:11px;line-height:1;color:#111;padding-left:1px">Send-Request-SMS</div>
<svg style="left:303px;top:505px" width="14" height="12" viewBox="0 0 14 12"><path d="M1.5 6 L5.3 9.8 L12.3 2" fill="none" stroke="#1e8a3a" stroke-width="2.8" stroke-linejoin="miter"/>
<path d="M1.5 6 L5.3 9.8 L12.3 2" fill="none" stroke="#48c060" stroke-width="1.2"/></svg>
<div class="c" style="left:321px;top:506px;">Passed</div>
<div class="c" style="left:403px;top:506px;">6/22/2015</div>
<div class="c" style="left:504px;top:506px;">1:32:14 PM</div>
<div class="a" style="left:200px;top:525px;width:101px;overflow:hidden;white-space:nowrap;font-size:11px;line-height:1;color:#111;padding-left:1px">Send-CreditCard-Info</div>
<svg style="left:303px;top:524px" width="14" height="12" viewBox="0 0 14 12"><path d="M1.5 6 L5.3 9.8 L12.3 2" fill="none" stroke="#1e8a3a" stroke-width="2.8" stroke-linejoin="miter"/>
<path d="M1.5 6 L5.3 9.8 L12.3 2" fill="none" stroke="#48c060" stroke-width="1.2"/></svg>
<div class="c" style="left:321px;top:525px;">Passed</div>
<div class="c" style="left:403px;top:525px;">6/22/2015</div>
<div class="c" style="left:504px;top:525px;">1:32:14 PM</div>
<div class="a" style="left:200px;top:544px;width:101px;overflow:hidden;white-space:nowrap;font-size:11px;line-height:1;color:#111;padding-left:1px">verify-transaction</div>
<svg style="left:303px;top:542px" width="14" height="13" viewBox="0 0 14 13"><path d="M2.5 2.5 L11.5 10.5 M11.5 2.5 L2.5 10.5" stroke="#d8320a" stroke-width="3" stroke-linecap="round"/>
<path d="M2.5 2.5 L11.5 10.5 M11.5 2.5 L2.5 10.5" stroke="#ff5a1a" stroke-width="1.3" stroke-linecap="round"/></svg>
<div class="c" style="left:321px;top:544px;">Failed</div>
<div class="c" style="left:403px;top:544px;">6/22/2015</div>
<div class="c" style="left:504px;top:544px;">1:32:14 PM</div>
<div class="t" style="left:764px;top:429px;font-size:11px;color:#111">Steps Details</div>
<div class="a" style="left:749px;top:444px;width:365px;height:150px;background:#ffff00"></div>
<div class="t" style="left:762px;top:447px;font-size:11px;color:#111"><b><u>Description:</u></b></div>
<div class="t" style="left:762px;top:461px;font-size:11px;color:#111">check test steps attachments for failed assertion details</div>
<div class="t" style="left:762px;top:503px;font-size:11px;color:#111"><b><u>Expected:</u></b></div>
<div class="t" style="left:762px;top:517px;font-size:11px;color:#111">see attachment</div>
<div class="t" style="left:762px;top:559px;font-size:11px;color:#111"><b><u>Actual:</u></b></div>
<div class="t" style="left:762px;top:573px;font-size:11px;color:#111">see attachment</div>
<div class="a" style="left:757px;top:444px;width:1px;height:150px;background:#dcdc00"></div>
<div class="a" style="left:5px;top:680px;width:1339px;height:1px;background:#c2c2c2"></div>
<div class="a" style="left:1118px;top:697px;width:70px;height:20px;background:#0096d6;border-radius:5px 5px 0 5px"></div>
<div class="a" style="left:1191px;top:697px;width:70px;height:20px;background:#0096d6;border-radius:5px 5px 0 5px"></div>
<div class="a" style="left:1264px;top:697px;width:70px;height:20px;background:#0096d6;border-radius:5px 5px 0 5px"></div>
<div class="t" style="left:1144.3px;top:699px;font-size:13px;transform:scaleX(0.8308);transform-origin:0 0;font-weight:bold;color:#fff">OK</div>
<div class="t" style="left:1206.7px;top:699px;font-size:13px;transform:scaleX(0.8985);transform-origin:0 0;font-weight:bold;color:#fff">Cancel</div>
<div class="t" style="left:1285px;top:699px;font-size:13px;transform:scaleX(0.9691);transform-origin:0 0;font-weight:bold;color:#fff">Help</div>
<div class="a" style="left:1144px;top:712px;width:9px;height:1px;background:#fff"></div>
<div class="a" style="left:1206px;top:712px;width:8px;height:1px;background:#fff"></div>
<div class="a" style="left:1285px;top:712px;width:9px;height:1px;background:#fff"></div>
<div class="a" style="left:111px;top:528px;width:8px;height:8px;background:#ffff00"></div>
</body></html>
